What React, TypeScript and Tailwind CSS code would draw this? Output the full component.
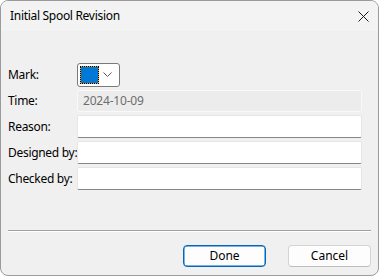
import React from "react";

const font = { fontFamily: '"Noto Sans", "Open Sans", sans-serif' };

function Field({ label, children }: { label: string; children: React.ReactNode }) {
  return (
    <div className="flex items-center">
      <div className="w-[69px] shrink-0 whitespace-nowrap text-[12px] text-black leading-none tracking-[-0.3px]">{label}</div>
      {children}
    </div>
  );
}

function TextBox() {
  return (
    <div className="flex-1 h-[23px] bg-white border border-[#e6e6e6] border-b-[#868686] rounded-[2px]" />
  );
}

export default function App() {
  return (
    <div
      className="w-[379px] h-[276px] border border-[#9b9b9b] rounded-[8px] overflow-hidden flex flex-col bg-[#f0f0f0]"
      style={font}
    >
      <div className="h-[30px] shrink-0 bg-[#f3f3f3] flex items-center pl-[9px] pr-[9px]">
        <span className="text-[12px] text-black flex-1 tracking-[-0.3px]">Initial Spool Revision</span>
        <svg width="11" height="11" viewBox="0 0 11 11">
          <path d="M0.5 0.5 L10.5 10.5 M10.5 0.5 L0.5 10.5" stroke="#1a1a1a" strokeWidth="1" />
        </svg>
      </div>
      <div className="flex-1 flex flex-col pt-[32px] pl-[7px] pr-[16px]">
        <div className="flex flex-col gap-[3px]">
          <Field label="Mark:">
            <div className="w-[43px] h-[24px] bg-white border border-[#7a7a7a] rounded-[3px] flex items-center pl-[2px]">
              <div className="bg-[#f0a030]">
                <div className="w-[19px] h-[18px] border border-dotted border-black bg-[#0078d7] bg-clip-padding" />
              </div>
              <svg width="9" height="6" viewBox="0 0 9 6" className="ml-[4px]">
                <path d="M0.5 0.5 L4.5 4.5 L8.5 0.5" fill="none" stroke="#5a5a5a" strokeWidth="1" />
              </svg>
            </div>
          </Field>
          <Field label="Time:">
            <div className="flex-1 h-[22px] bg-[#ececec] border border-[#f9f9f9] rounded-[2px] flex items-center pl-[5px] text-[12px] text-[#6d6d6d] tracking-[-0.2px]">
              2024-10-09
            </div>
          </Field>
          <Field label="Reason:">
            <TextBox />
          </Field>
          <Field label="Designed by:">
            <TextBox />
          </Field>
          <Field label="Checked by:">
            <TextBox />
          </Field>
        </div>
        <div className="mt-[40px] mr-[-9px] h-[2px] border-t border-[#a0a0a0] border-b border-b-white" />
        <div className="flex justify-end gap-[22px] mt-[13px] mr-[-9px]">
          <button className="w-[83px] h-[22px] bg-[#fdfdfd] border border-[#0067c0] shadow-[inset_0_0_0_0.5px_#0067c0] rounded-[4px] text-[12px] text-black flex items-center justify-center">
            Done
          </button>
          <button className="w-[83px] h-[22px] bg-[#fdfdfd] border border-[#d4d4d4] border-b-[#bdbdbd] rounded-[4px] text-[12px] text-black flex items-center justify-center">
            Cancel
          </button>
        </div>
      </div>
    </div>
  );
}
